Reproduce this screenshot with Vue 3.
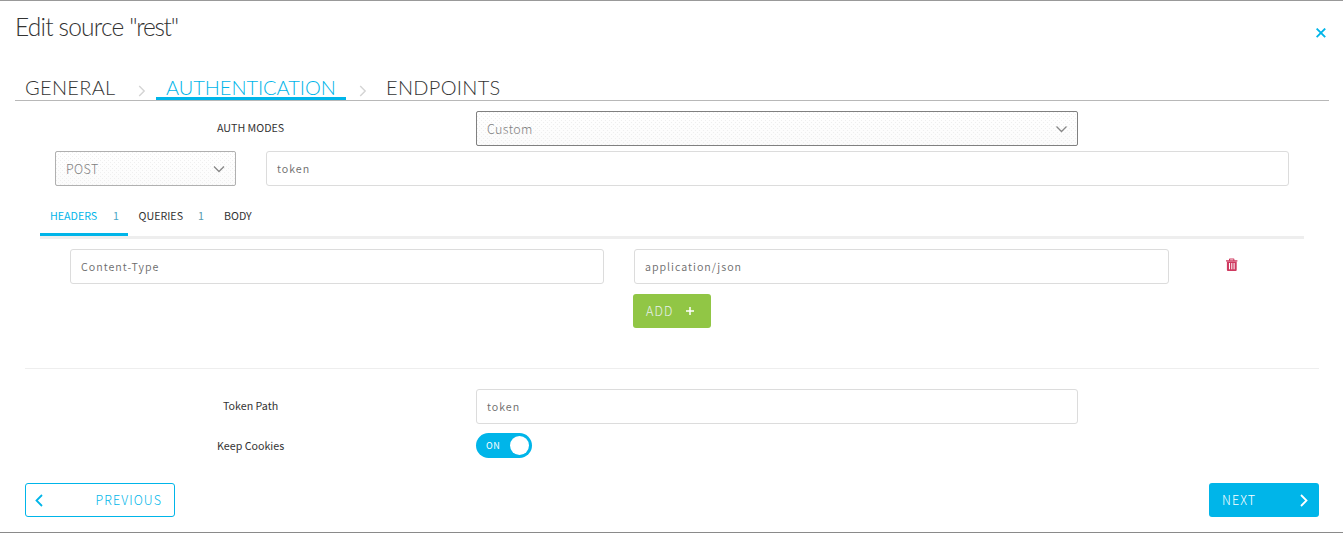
<script setup>
import { ref } from 'vue'

const steps = [
  { id: 'general', label: 'GENERAL' },
  { id: 'authentication', label: 'AUTHENTICATION' },
  { id: 'endpoints', label: 'ENDPOINTS' },
]
const tabs = [
  { id: 'headers', label: 'HEADERS', count: 1 },
  { id: 'queries', label: 'QUERIES', count: 1 },
  { id: 'body', label: 'BODY' },
]
const step = ref('authentication')
const tab = ref('headers')
const keepCookies = ref(true)
</script>

<template>
  <section class="dialog">
    <header class="head">
      <h1 class="title">Edit source <span class="quoted">"rest"</span></h1>
      <button class="close" aria-label="Close">
        <svg width="10" height="10" viewBox="0 0 10 10"><path d="M.6.6l8.6 8.6M9.2.6L.6 9.2" /></svg>
      </button>
    </header>

    <nav class="steps">
      <template v-for="(s, i) in steps" :key="s.id">
        <svg v-if="i" class="sep" width="8" height="12" viewBox="0 0 8 12"><path d="M1.2 1l5 5-5 5" /></svg>
        <a class="step" :class="[s.id, { active: step === s.id }]" @click="step = s.id">{{ s.label }}</a>
      </template>
    </nav>

    <div class="row modes">
      <label class="label auth">AUTH MODES</label>
      <div class="select dark">
        <span>Custom</span>
        <svg width="12" height="8" viewBox="0 0 12 8"><path d="M1.5 1.5l5 5 5-5" /></svg>
      </div>
    </div>

    <div class="row request">
      <div class="select">
        <span class="method">POST</span>
        <svg width="12" height="8" viewBox="0 0 12 8"><path d="M1 1.5l5 5 5-5" /></svg>
      </div>
      <div class="field"><span>token</span></div>
    </div>

    <nav class="tabs">
      <a v-for="t in tabs" :key="t.id" class="tab" :class="[t.id, { active: tab === t.id }]" @click="tab = t.id">
        <span class="name">{{ t.label }}</span><span v-if="t.count" class="count">{{ t.count }}</span>
      </a>
    </nav>

    <div class="pair">
      <div class="field"><span class="key">Content-Type</span></div>
      <div class="field"><span class="value">application/json</span></div>
      <button class="remove" aria-label="Remove">
        <svg width="12" height="14" viewBox="0 0 12 14">
          <path class="lid" d="M0 2.3h11.4v1.2H0zM3 2.5V1.2Q3 .4 3.8.4h3.8q.8 0 .8.8v1.3H7.3V1.5H4.1v1z" />
          <path class="can" d="M.9 3.4h9.8v8.7q0 1-1 1H1.9q-1 0-1-1z" />
          <path class="slots" d="M3.5 5v6.3M5.8 5v6.3M8.1 5v6.3" />
        </svg>
      </button>
    </div>

    <button class="add">
      <span>ADD</span>
      <svg width="8" height="8" viewBox="0 0 8 8"><path d="M4 0v8M0 4h8" /></svg>
    </button>

    <hr class="rule" />

    <div class="row path">
      <label class="label token">Token Path</label>
      <div class="field"><span>token</span></div>
    </div>

    <div class="row cookies">
      <label class="label cookie">Keep Cookies</label>
      <button class="switch" @click="keepCookies = !keepCookies"><span>{{ keepCookies ? 'ON' : 'OFF' }}</span><i></i></button>
    </div>

    <footer class="foot">
      <button class="btn previous">
        <svg width="8" height="13" viewBox="0 0 8 13"><path d="M7 1L1.5 6.5 7 12" /></svg>
        <span>PREVIOUS</span>
      </button>
      <button class="btn next">
        <span>NEXT</span>
        <svg width="8" height="13" viewBox="0 0 8 13"><path d="M1 1l5.5 5.5L1 12" /></svg>
      </button>
    </footer>
  </section>
</template>

<style>
body { background: #fff; overflow: hidden; }
</style>

<style scoped>
* { box-sizing: border-box; }
.dialog {
  width: 1343px; height: 533px; background: #fff; color: #333;
  border-top: 1px solid #999; border-bottom: 1px solid #8a8a8a;
  font: 10.7px/16px "Noto Sans CJK SC", "Noto Sans CJK JP", sans-serif;
  display: flex; flex-direction: column;
}
svg { display: block; flex: none; fill: none; }
button { font: inherit; padding: 0; border: 0; background: none; }
.head { height: 71px; display: flex; justify-content: space-between; padding: 9px 17px 0 15px; }
.title { margin: 0; font: 300 24.5px/34px Lato, sans-serif; letter-spacing: -.8px; color: #333; white-space: nowrap; }
.quoted { letter-spacing: -1.3px; }
.close { width: 10px; height: 10px; margin-top: 18px; }
.close svg { stroke: #00b5e9; stroke-width: 1.9; }

.steps { height: 29px; margin: 0 14px 0 15px; border-bottom: 1px solid #b8b8b8; display: flex; }
.step { height: 28px; padding: 0 10px; font: 300 20px/30px Lato, sans-serif; color: #333; white-space: nowrap; }
.general { width: 110px; letter-spacing: .3px; }
.authentication { width: 190px; letter-spacing: -.05px; }
.endpoints { letter-spacing: .3px; }
.active.step { color: #00b5e9; border-bottom: 3px solid #00b5e9; }
.sep { margin: 13px 14px 0 13px; stroke: #d4d4d4; stroke-width: 1.4; }
.sep + .step { margin-left: -5px; }
.sep + .authentication { margin-left: -4px; }

.row { display: flex; }
.label { flex: none; width: 259px; line-height: 33px; }
.select, .field {
  height: 35px; border: 1px solid #dcdcdc; border-radius: 3px; background: #fff;
  display: flex; align-items: center; padding: 0 10px; color: #6c6c6c;
  font-size: 10.7px; font-weight: 350; letter-spacing: 1px;
}
.select {
  justify-content: space-between; border-color: #b0b0b0; border-radius: 2px; color: #808080;
  font-size: 12.5px; font-weight: 300; letter-spacing: .4px;
  background:
    radial-gradient(circle at 1.5px 1.5px, #efefef .7px, transparent .8px) 3px 3px / 4px 4px,
    radial-gradient(circle at 1.5px 1.5px, #efefef .7px, transparent .8px) 5px 5px / 4px 4px,
    linear-gradient(#fff, #fbfbfb);
}
.select.dark { border-color: #808080; }
.select svg { stroke: #888; stroke-width: 1.3; }
.modes { margin: 10px 0 0 217px; }
.modes .select, .path .field { width: 602px; }
.request { margin: 5px 54px 0 55px; gap: 30px; }
.request .select { width: 181px; }
.request .field { flex: 1; }
.field span { margin-top: 1px; }

.tabs { height: 53px; margin: 0 39px 0 40px; border-bottom: 3px solid #eee; display: flex; padding-top: 15px; }
.tab { height: 35px; line-height: 30px; padding-left: 10px; display: flex; white-space: nowrap; }
.tab.active { color: #00b5e9; border-bottom: 3px solid #00b5e9; }
.headers { width: 88px; }
.queries { width: 86px; padding-left: 10.5px; }
.name { flex: none; }
.count { color: #4aa5c5; }
.headers .count { width: 15px; margin-left: auto; }
.queries .count { width: 16px; margin-left: auto; color: #5599ae; }

.pair { display: flex; margin: 10px 0 0 70px; }
.pair .field { width: 534px; margin-right: 30px; }
.pair .field + .field { width: 535px; margin-right: 57px; }
.remove { width: 12px; height: 14px; margin-top: 9px; }
.lid, .can { fill: #cf3a60; }
.slots { stroke: #fff; stroke-width: 1; }

.add {
  width: 78px; height: 34px; margin: 10px 0 0 633px; padding: 0 17px 0 13px; border-radius: 3px; background: #91c645; color: #e8f0ee;
  display: flex; align-items: center; justify-content: space-between; font-size: 12.5px; font-weight: 300; letter-spacing: 1.1px;
}
.add svg { stroke: #fff; stroke-width: 1.5; }
.rule { width: 1294px; height: 1px; border: 0; background: #eee; margin: 40px 0 0 25px; }
.path { margin: 20px 0 0 217px; }
.token { padding-left: 6px; }
.cookies { margin: 9px 0 0 217px; height: 25px; }
.cookie { line-height: 25px; }
.switch { width: 56px; height: 25px; border-radius: 13px; background: #00b5e9; color: #fff; padding: 0 3px 0 10px; display: flex; align-items: center; justify-content: space-between; font-size: 9px; letter-spacing: .6px; }
.switch i { width: 19px; height: 19px; border-radius: 50%; background: #fff; }

.foot { display: flex; justify-content: space-between; margin: 25px 24px 0 25px; }
.btn { height: 34px; border-radius: 3px; display: flex; align-items: center; justify-content: space-between; font-size: 12.5px; font-weight: 300; letter-spacing: 1.1px; }
.btn svg { stroke-width: 1.8; }
.previous { width: 150px; border: 1px solid #00b5e9; color: #00b5e9; padding: 0 12px 0 9px; }
.previous svg { stroke: #00b5e9; }
.next { width: 110px; background: #00b5e9; color: #fff; padding: 0 11px 0 13px; }
.next svg { stroke: #fff; }
</style>
